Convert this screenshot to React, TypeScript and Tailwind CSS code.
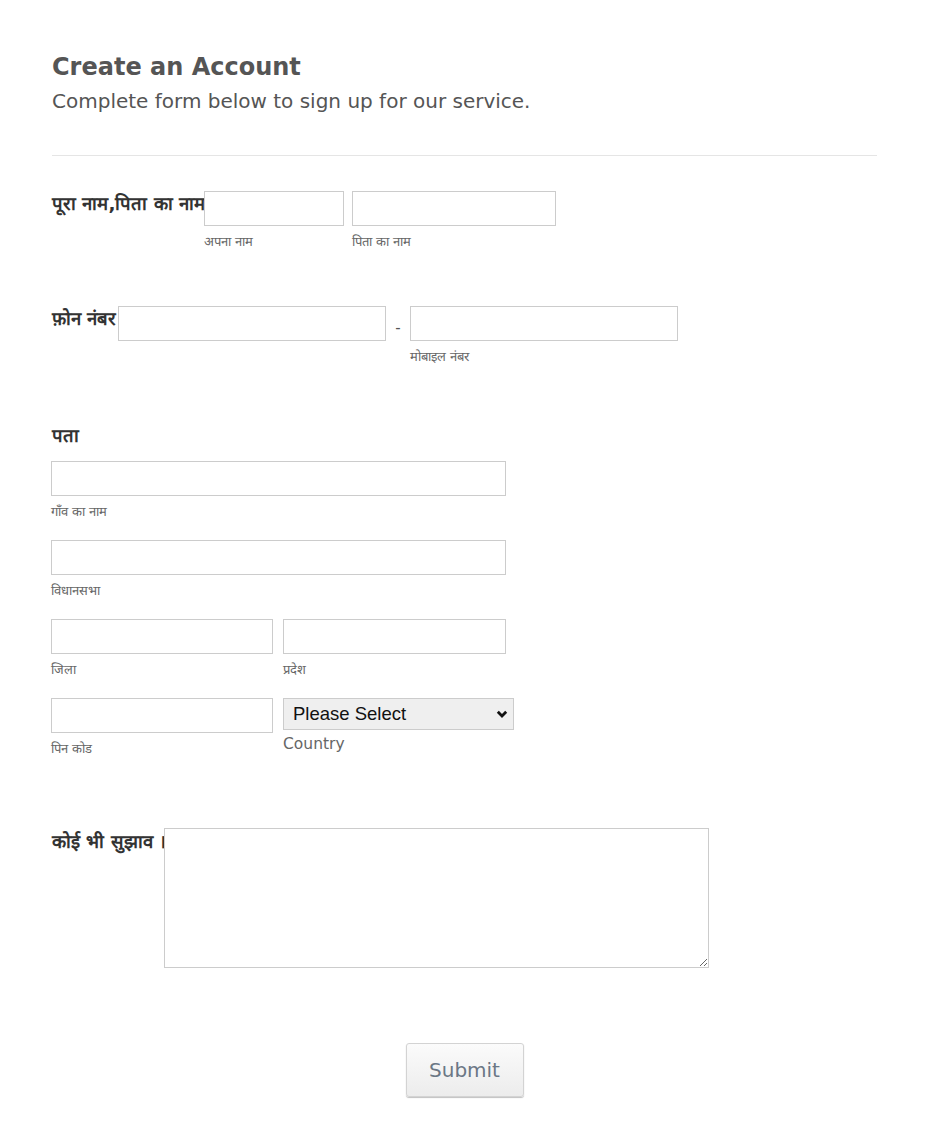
import React from "react";

const font = { fontFamily: '"DejaVu Sans", Verdana, sans-serif' } as React.CSSProperties;

function Sub({ children }: { children: React.ReactNode }) {
  return <div className="mt-[8px] text-[13px] leading-4 text-[#666]">{children}</div>;
}

function Field({ width, label }: { width: string; label?: string }) {
  return (
    <div className="flex flex-col">
      <input type="text" className={`${width} h-[35px] border border-[#ccc] bg-white px-2 text-[14px] outline-none`} />
      {label && <Sub>{label}</Sub>}
    </div>
  );
}

export default function App() {
  return (
    <div className="w-[930px] min-h-[1148px] bg-white text-[#555] pl-[51px] pr-[52px] pt-[53px] pb-[50px]" style={font}>
      {/* Header */}
      <h2 className="pl-[1px] text-[24px] leading-7 font-bold text-[#555]">Create an Account</h2>
      <p className="mt-[8px] pl-[1px] text-[20px] leading-6 text-[#555]">Complete form below to sign up for our service.</p>
      <div className="mt-[42px] ml-[1px] w-[825px] border-t border-[#e5e5e5]" />

      {/* Name row */}
      <div className="mt-[35px] flex items-start pl-[1px]">
        <label className="w-[152px] whitespace-nowrap pt-[1px] text-[18.5px] font-bold leading-6 text-[#333]">पूरा नाम,पिता का नाम</label>
        <div className="flex gap-[8px]">
          <Field width="w-[140px]" label="अपना नाम" />
          <Field width="w-[204px]" label="पिता का नाम" />
        </div>
      </div>

      {/* Phone row */}
      <div className="mt-[56px] flex items-start pl-[1px]">
        <label className="w-[66px] whitespace-nowrap pt-[1px] text-[18.5px] font-bold leading-6 text-[#333]">फ़ोन नंबर</label>
        <Field width="w-[268px]" />
        <span className="w-[24px] pt-[12px] text-center text-[15px] leading-5">-</span>
        <Field width="w-[268px]" label="मोबाइल नंबर" />
      </div>

      {/* Address */}
      <div className="mt-[59px]">
        <label className="block pl-[1px] text-[18.5px] font-bold leading-6 text-[#333]">पता</label>
        <div className="mt-[13px] flex flex-col gap-[20px]">
          <Field width="w-[455px]" label="गाँव का नाम" />
          <Field width="w-[455px]" label="विधानसभा" />
          <div className="flex gap-[10px]">
            <Field width="w-[222px]" label="जिला" />
            <Field width="w-[223px]" label="प्रदेश" />
          </div>
          <div className="flex gap-[10px]">
            <Field width="w-[222px]" label="पिन कोड" />
            <div className="flex flex-col">
              <div className="relative w-[231px]">
                <select
                  className="w-[231px] h-[32px] appearance-none border border-[#ccc] bg-[#efefef] pl-[9px] text-[18.5px] text-[#111] outline-none"
                  style={{ fontFamily: '"Liberation Sans", Arial, sans-serif' }}
                  defaultValue=""
                >
                  <option value="">Please Select</option>
                </select>
                <svg className="pointer-events-none absolute right-[6px] top-[12px]" width="12" height="9" viewBox="0 0 12 9">
                  <polyline points="1.8,1.8 6,6 10.2,1.8" fill="none" stroke="#111" strokeWidth="2.8" />
                </svg>
              </div>
              <div className="mt-[4px] text-[15.5px] leading-5 text-[#666]">Country</div>
            </div>
          </div>
        </div>
      </div>

      {/* Suggestion */}
      <div className="mt-[71px] flex items-start pl-[1px]">
        <label className="w-[112px] whitespace-nowrap pt-[2px] text-[18.5px] font-bold leading-6 text-[#333]">कोई भी सुझाव ।</label>
        <textarea className="block w-[545px] h-[140px] border border-[#ccc] bg-white p-2 text-[14px] outline-none" />
      </div>

      {/* Submit */}
      <div className="mt-[75px] flex justify-center">
        <button className="w-[118px] h-[54px] rounded-[3px] border border-[#d3d3d3] bg-gradient-to-b from-[#fbfbfb] to-[#ececec] text-[20px] text-[#6b7785] shadow-[0_1px_1px_rgba(0,0,0,0.25)]">
          Submit
        </button>
      </div>
    </div>
  );
}
